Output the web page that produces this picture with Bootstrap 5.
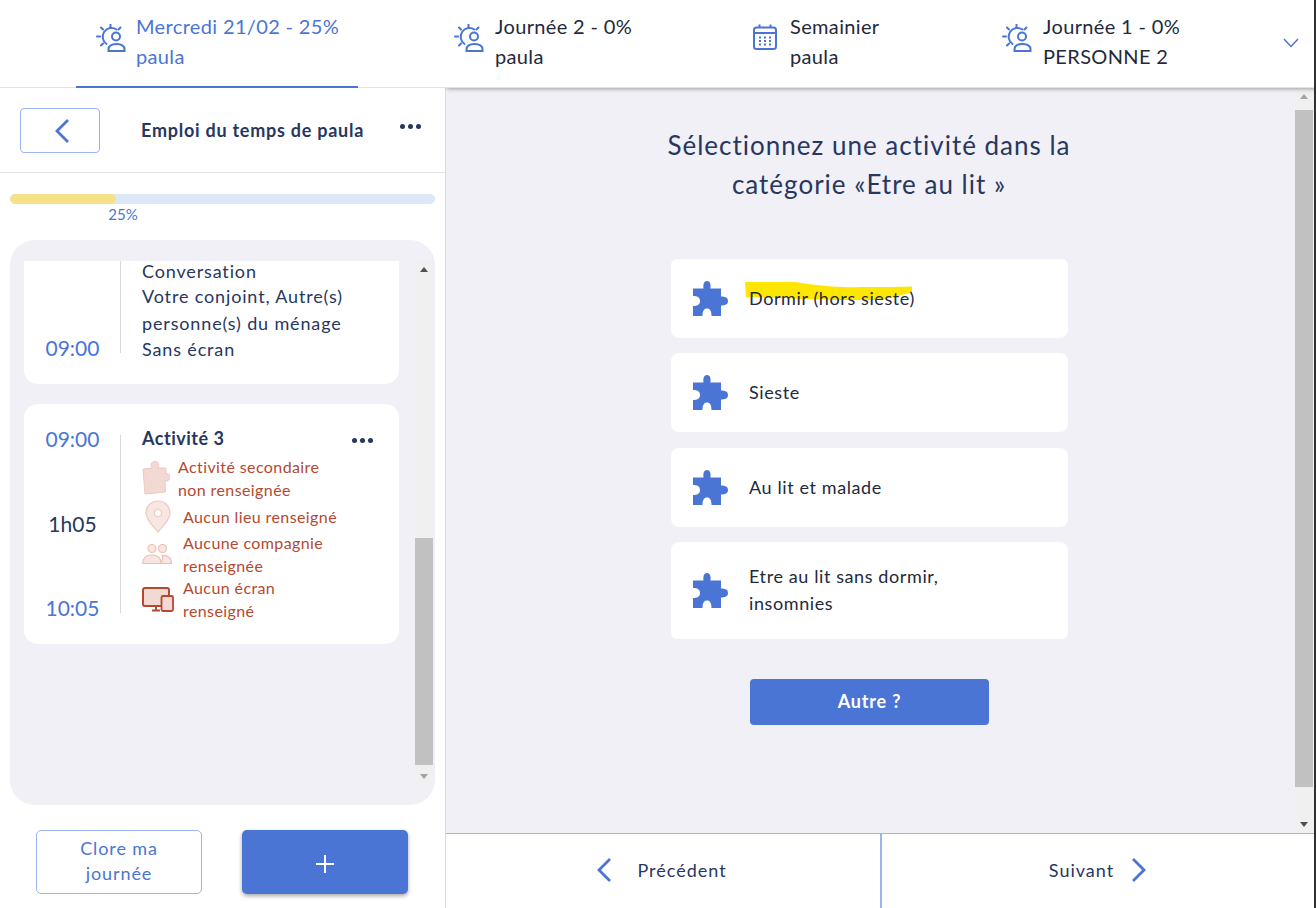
<!DOCTYPE html>
<html lang="fr">
<head>
    <meta charset="UTF-8">
    <meta name="viewport" content="width=device-width, initial-scale=1.0">
    <title>Emploi du temps de paula</title>
    <link href="https://cdn.jsdelivr.net/npm/bootstrap@5.3.3/dist/css/bootstrap.min.css" rel="stylesheet">
    <style>
        body {
            height: 908px;
            overflow: hidden;
            font-family: "Lato", "Liberation Sans", sans-serif;
            color: #23293b;
            background: #fff;
            border-right: 2px solid #303030;
        }

        /* top bar */
        .day-bar {
            height: 88px;
            padding-left: 76px;
            position: relative;
            z-index: 2;
            background: #fff;
            border-bottom: 1px solid #e3e3e8;
            box-shadow: 446px 2px 4px -1px rgba(60, 60, 70, .45);
        }
        .day-tab {
            height: 88px;
            padding: 11px 20px 0;
            font-size: 20px;
            line-height: 30px;
            letter-spacing: .35px;
            color: #23293b;
            border-bottom: 2px solid transparent;
            white-space: nowrap;
        }
        .day-tab.is-on { width: 282px; color: #4a75d4; border-bottom-color: #4a75d4; }
        .day-tab svg { margin: 13px 11px 0 0; flex: none; }
        .day-tab.is-on svg { margin-right: 10px; }
        .day-tab svg.cal-icon { margin-right: 13px; }
        .tab-two { margin-left: 76px; width: 219px; }
        .tab-three { margin-left: 80px; width: 173px; }
        .tab-four { margin-left: 76px; width: 217px; }
        .bar-chevron { margin: 38px 0 0 84px; }

        /* left column */
        .side-col { width: 446px; flex: none; border-right: 1px solid #d8d8e0; }
        .side-head { height: 85px; padding: 20px 24px 0 20px; border-bottom: 1px solid #e3e3e8; }
        .back-btn {
            width: 80px;
            height: 45px;
            padding: 0 0 0 3px;
            border: 1px solid #9db5ee;
            border-radius: 4px;
            background: #fff;
        }
        .side-title { margin: 0 0 0 41px; font-size: 18px; font-weight: 700; letter-spacing: .75px; color: #27375f; line-height: 44px; white-space: nowrap; }
        .dots { font-size: 0; display: flex; gap: 3px; }
        .dots i { width: 5px; height: 5px; border-radius: 50%; background: #27375f; display: block; }
        .progress-wrap { padding: 21px 10px 0 10px; height: 67px; }
        .day-progress { height: 10px; border-radius: 5px; background: #dce7f8; }
        .day-progress .progress-bar { background: #f4e188; border-radius: 5px; }
        .progress-label { width: 226px; text-align: center; font-size: 15px; line-height: 20px; color: #4a75d4; }

        .activity-panel {
            height: 565px;
            margin: 0 10px;
            padding-top: 21px;
            background: #f0f0f6;
            border-radius: 25px;
        }
        .activity-clip { height: 524px; overflow: hidden; padding: 0 0 0 14px; flex: 1; }
        .act-card {
            width: 375px;
            border: 0;
            border-radius: 14px;
            background: #fff;
            margin-bottom: 20px;
            padding: 0 0 0 21px;
        }
        .first-act { height: 123px; border-radius: 0 0 14px 14px; }
        .second-act { height: 240px; padding-top: 20px; }
        .time-col {
            width: 55px;
            flex: none;
            font-size: 21px;
            color: #4a75d4;
            line-height: 26px;
            text-align: center;
        }
        .time-mid { color: #27375f; }
        .act-divider { width: 1px; background: #d9d9dd; margin: 0 21px 0 20px; flex: none; }
        .first-act .act-divider { height: 92px; }
        .first-act .time-col { padding-top: 74px; }
        .second-act .act-divider { height: 178px; margin-top: 11px; }
        .second-act .time-col { height: 197px; padding-top: 2px; }
        .act-text { font-size: 18px; line-height: 26.4px; color: #27375f; letter-spacing: .85px; white-space: nowrap; }
        .act-first-line { height: 22.4px; line-height: 20px; }
        .act-name { font-size: 18px; font-weight: 700; letter-spacing: .5px; color: #27375f; line-height: 28px; height: 28px; }
        .act-dots { margin: 14px 26px 0 0; }
        .miss-row { color: #b5492f; font-size: 16px; line-height: 23px; letter-spacing: .4px; white-space: nowrap; }
        .miss-row svg { flex: none; }
        .miss-icon { width: 36px; flex: none; }
        .row-one { height: 46px; margin-top: 3px; }
        .row-one .miss-icon { width: 36px; padding-top: 6px; }
        .row-two { height: 30px; margin-top: 4px; }
        .row-two .miss-icon { width: 41px; padding-left: 3px; }
        .row-two .miss-icon svg { margin-top: -5px; }
        .row-three { height: 45px; margin-top: -3px; line-height: 22.5px; }
        .row-three .miss-icon { width: 41px; padding-top: 9px; }
        .row-four { height: 45px; line-height: 22.5px; }
        .row-four .miss-icon { width: 41px; padding-top: 10px; }

        .fake-scroll { width: 18px; flex: none; margin: 0 2px 0 0; height: 524px; background: #f0f0f0; font-size: 0; }
        .scroll-up, .scroll-down { height: 17px; display: flex; align-items: center; justify-content: center; }
        .tri-up { width: 0; height: 0; border: 4px solid transparent; border-top: 0; border-bottom: 5px solid #505050; }
        .tri-down { width: 0; height: 0; border: 4px solid transparent; border-bottom: 0; border-top: 5px solid #505050; }
        .tri-light { border-bottom-color: #a3a3a3; }
        .tri-grey { border-top-color: #a3a3a3; }
        .thumb { background: #c1c1c1; }
        .side-scroll .scroll-gap { height: 260px; }
        .side-scroll .thumb { height: 227px; }

        .side-foot { padding: 25px 0 0 36px; gap: 40px; }
        .close-day, .add-act { width: 166px; height: 64px; border-radius: 5px; }
        .close-day {
            background: #fff;
            border: 1px solid #9db5ee;
            color: #4a75d4;
            font-size: 18px;
            line-height: 25px;
            letter-spacing: .9px;
            padding: 0 30px 2px;
        }
        .add-act { background: #4a75d4; border: 0; box-shadow: 0 2px 4px rgba(0, 0, 0, .35); padding: 0; }

        /* right column */
        .main-col { background: #f0f0f6; }
        .main-body { height: 745px; }
        .main-scroll-area { flex: 1; padding: 38px 0 0 0; }
        .main-title {
            width: 440px;
            margin: 0 0 0 203px;
            text-align: center;
            font-size: 26px;
            line-height: 39px;
            font-weight: 400;
            letter-spacing: 1px;
            color: #27375f;
        }
        .choice-list { width: 397px; margin: 55px 0 0 225px; gap: 15.3px; }
        .choice-item {
            height: 79px;
            border: 0;
            border-radius: 8px;
            background: #fff;
            padding: 0 0 0 22px;
            font-size: 18px;
            line-height: 27px;
            letter-spacing: .6px;
            position: relative;
            color: #23293b;
        }
        .choice-tall { height: 97px; }
        .choice-item svg.piece { margin-right: 21px; flex: none; }
        .choice-label { position: relative; z-index: 1; }
        .marker-stroke { position: absolute; left: 74px; top: 23px; }
        .other-btn {
            display: block;
            width: 239px;
            height: 46px;
            margin: 40px 0 0 304px;
            background: #4a75d4;
            border: 0;
            border-radius: 4px;
            color: #fff;
            font-size: 18px;
            font-weight: 700;
            letter-spacing: .8px;
            padding: 6px 0;
        }
        .main-scroll { width: 18px; flex: none; margin-right: 1px; background: #f0f0f0; }
        .main-scroll .thumb { height: 677px; margin-top: 5px; }
        .main-scroll .scroll-up { height: 17px; }

        .step-bar { height: 75px; background: #fff; border-top: 1px solid #9db5ee; }
        .step-cell { flex: 1; font-size: 18px; letter-spacing: 1px; color: #27375f; gap: 17px; padding-bottom: 2px; }
        .step-cell + .step-cell { border-left: 2px solid #9db5ee; }
        .step-left { width: 434px; flex: none; gap: 25px; padding-right: 3px; }
    </style>
</head>
<body>
    <svg width="0" height="0" class="d-block position-absolute">
        <defs>
            <symbol id="sun-person" viewBox="0 0 30 28">
                <g fill="none" stroke="#4a75d4" stroke-width="2" stroke-linecap="round">
                    <circle cx="20" cy="12.5" r="4"/>
                    <path d="M10.5 20A8.5 8.5 0 0 1 20.5 5.5"/>
                    <path d="M12.5 27V25.5C12.500 21.500 15.500 20 20.500 20S28.500 21.500 28.500 25.500V27Z"/>
                    <path d="M14.500 0.500V3M1 12.500H4M5 3.500L7 5.500M24.500 3.500L22.500 5.500M5 21.500L7 19.500"/>
                </g>
            </symbol>
            <symbol id="puzzle-piece" viewBox="0 0 35 35">
                <path d="M0 7.500H10.500C10 3 11 0 14 0S18 3 17.500 7.500H28V15.500C32 15.500 35 16.500 35 20S32 24.500 28 24.500V35H18.500C18.500 30 17 27.500 14 27.500S9.500 30 9.500 35H0V25C4 25 7 24 7 20S4 15 0 15Z"/>
            </symbol>
        </defs>
    </svg>

    <nav class="day-bar d-flex">
        <div class="day-tab is-on d-flex">
            <svg width="30" height="28"><use href="#sun-person"/></svg>
            <div>Mercredi 21/02 - 25%<br>paula</div>
        </div>
        <div class="day-tab tab-two d-flex">
            <svg width="30" height="28"><use href="#sun-person"/></svg>
            <div>Journée 2 - 0%<br>paula</div>
        </div>
        <div class="day-tab tab-three d-flex">
            <svg class="cal-icon" width="24" height="26" viewBox="0 0 24 26" fill="none" stroke="#4a75d4" stroke-width="2">
                <rect x="1" y="3.500" width="22" height="21.500" rx="2.500"/>
                <path d="M1 9H23M6.500 0.500V4M17.500 0.500V4"/>
                <path d="M6 13.500H8M11 13.500H13M16 13.500H18M6 17H8M11 17H13M16 17H18M6 20.500H8M11 20.500H13M16 20.500H18" stroke-width="1.800"/>
            </svg>
            <div>Semainier<br>paula</div>
        </div>
        <div class="day-tab tab-four d-flex">
            <svg width="30" height="28"><use href="#sun-person"/></svg>
            <div>Journée 1 - 0%<br>PERSONNE 2</div>
        </div>
        <svg class="bar-chevron" width="16" height="10" viewBox="0 0 16 10" fill="none" stroke="#4a75d4" stroke-width="1.500"><path d="M1 1L8 8.500L15 1"/></svg>
    </nav>

    <div class="d-flex">
        <aside class="side-col">
            <div class="side-head d-flex">
                <button class="back-btn btn" type="button" aria-label="Retour">
                    <svg width="16" height="26" viewBox="0 0 16 26" fill="none" stroke="#4a75d4" stroke-width="2.800"><path d="M14 2L3 13L14 24"/></svg>
                </button>
                <h1 class="side-title">Emploi du temps de paula</h1>
                <div class="dots ms-auto mt-3"><i></i><i></i><i></i></div>
            </div>

            <div class="progress-wrap">
                <div class="progress day-progress">
                    <div class="progress-bar" style="width: 25%"></div>
                </div>
                <div class="progress-label">25%</div>
            </div>

            <div class="activity-panel d-flex">
                <div class="activity-clip">
                    <div class="card act-card first-act d-flex flex-row">
                        <div class="time-col">09:00</div>
                        <div class="act-divider"></div>
                        <div class="act-text">
                            <div class="act-first-line">Conversation</div>
                            Votre conjoint, Autre(s)<br>personne(s) du ménage<br>Sans écran
                        </div>
                    </div>
                    <div class="card act-card second-act d-flex flex-row">
                        <div class="time-col d-flex flex-column justify-content-between">
                            <span>09:00</span>
                            <span class="time-mid">1h05</span>
                            <span>10:05</span>
                        </div>
                        <div class="act-divider"></div>
                        <div class="flex-grow-1">
                            <div class="act-name">Activité 3</div>
                            <div class="miss-row row-one d-flex">
                                <div class="miss-icon">
                                    <svg width="28" height="34" viewBox="0 0 28 34" fill="#f2d9d3" stroke="#edc9c0"><path d="M1 8L10 7C8 3 10 0.500 13 0.500S18 3 16 7L24 7V13C27 12 28 14 27.500 17S25 21 23 19L23.500 31L3 33Z"/></svg>
                                </div>
                                <div>Activité secondaire<br>non renseignée</div>
                            </div>
                            <div class="miss-row row-two d-flex">
                                <div class="miss-icon">
                                    <svg width="26" height="33" viewBox="0 0 26 33" fill="#f7e6e2" stroke="#edc9c0" stroke-width="1.200"><path d="M13 32C8 26 1 20 1 13A12 12 0 0 1 25 13C25 20 18 26 13 32Z"/><circle cx="13" cy="13" r="3.500" fill="#fff"/></svg>
                                </div>
                                <div>Aucun lieu renseigné</div>
                            </div>
                            <div class="miss-row row-three d-flex">
                                <div class="miss-icon">
                                    <svg width="30" height="20" viewBox="0 0 30 20" fill="#f7e6e2" stroke="#edc0b5" stroke-width="1.200"><circle cx="10" cy="4.500" r="4"/><circle cx="20.500" cy="4.500" r="4"/><path d="M19 19.500H29.500C29.500 14 26 11 20 11.500C22 14 20 16 19 19.500Z"/><path d="M0.800 19.500C0.800 14 4 11 10 11S19 14 19 19.500Z"/></svg>
                                </div>
                                <div>Aucune compagnie<br>renseignée</div>
                            </div>
                            <div class="miss-row row-four d-flex">
                                <div class="miss-icon">
                                    <svg width="32" height="25" viewBox="0 0 32 25" fill="#f2d9d3" stroke="#b5492f" stroke-width="2"><rect x="1" y="1" width="26" height="18" rx="2"/><path d="M10 23.500H18M14 19V23" fill="none"/><rect x="19.500" y="9" width="11.500" height="15" rx="1.500" stroke-width="1.800" /></svg>
                                </div>
                                <div>Aucun écran<br>renseigné</div>
                            </div>
                        </div>
                        <div class="dots act-dots"><i></i><i></i><i></i></div>
                    </div>
                </div>
                <div class="fake-scroll side-scroll d-flex flex-column">
                    <div class="scroll-up"><span class="tri-up"></span></div>
                    <div class="scroll-gap"></div>
                    <div class="thumb"></div>
                    <div class="mt-auto scroll-down"><span class="tri-down tri-grey"></span></div>
                </div>
            </div>

            <div class="side-foot d-flex">
                <button class="btn close-day" type="button">Clore ma journée</button>
                <button class="btn add-act" type="button" aria-label="Ajouter">
                    <svg width="18" height="18" viewBox="0 0 18 18" stroke="#fff" stroke-width="2"><path d="M9 0V18M0 9H18"/></svg>
                </button>
            </div>
        </aside>

        <main class="main-col flex-grow-1">
            <div class="main-body d-flex">
                <div class="main-scroll-area">
                    <h2 class="main-title">Sélectionnez une activité dans la catégorie «Etre au lit »</h2>
                    <div class="list-group choice-list">
                        <div class="list-group-item choice-item d-flex align-items-center">
                            <svg class="marker-stroke" width="168" height="20" viewBox="0 0 168 20" fill="#ffe600"><path d="M0 0L50 0C70 3 90 6 115 5C135 5 150 5 167 4.500V11C155 12 145 18 125 18C100 18 60 18 40 16L1 15Z"/></svg>
                            <svg class="piece" width="35" height="35" fill="#4a75d4"><use href="#puzzle-piece"/></svg>
                            <span class="choice-label">Dormir (hors sieste)</span>
                        </div>
                        <div class="list-group-item choice-item d-flex align-items-center">
                            <svg class="piece" width="35" height="35" fill="#4a75d4"><use href="#puzzle-piece"/></svg>
                            <span class="choice-label">Sieste</span>
                        </div>
                        <div class="list-group-item choice-item d-flex align-items-center">
                            <svg class="piece" width="35" height="35" fill="#4a75d4"><use href="#puzzle-piece"/></svg>
                            <span class="choice-label">Au lit et malade</span>
                        </div>
                        <div class="list-group-item choice-item choice-tall d-flex align-items-center">
                            <svg class="piece" width="35" height="35" fill="#4a75d4"><use href="#puzzle-piece"/></svg>
                            <span class="choice-label">Etre au lit sans dormir,<br>insomnies</span>
                        </div>
                    </div>
                    <button class="btn other-btn" type="button">Autre ?</button>
                </div>
                <div class="main-scroll d-flex flex-column">
                    <div class="scroll-up"><span class="tri-up tri-light"></span></div>
                    <div class="thumb"></div>
                    <div class="mt-auto scroll-down"><span class="tri-down"></span></div>
                </div>
            </div>
            <div class="step-bar d-flex">
                <div class="step-cell step-left d-flex align-items-center justify-content-center">
                    <svg width="16" height="26" viewBox="0 0 16 26" fill="none" stroke="#4a75d4" stroke-width="2.800"><path d="M14 2L3 13L14 24"/></svg>
                    <span>Précédent</span>
                </div>
                <div class="step-cell d-flex align-items-center justify-content-center">
                    <span>Suivant</span>
                    <svg width="16" height="26" viewBox="0 0 16 26" fill="none" stroke="#4a75d4" stroke-width="2.800"><path d="M2 2L13 13L2 24"/></svg>
                </div>
            </div>
        </main>
    </div>
</body>
</html>
